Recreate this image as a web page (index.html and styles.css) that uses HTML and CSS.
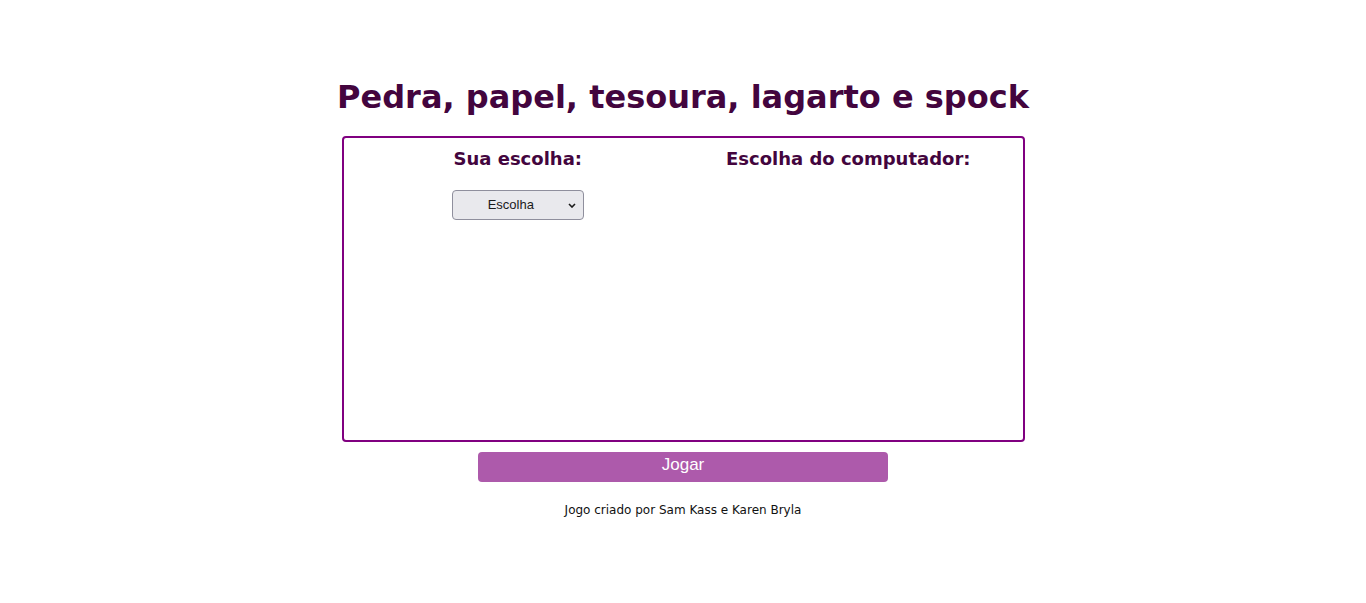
FILE: index.html
```html
<!DOCTYPE html>
<html lang="pt">
<head>
<meta charset="utf-8">
<title>Pedra, papel, tesoura, lagarto e spock</title>
<link rel="stylesheet" href="styles.css">
</head>
<body>
<main class="page">
  <h1 class="title">Pedra, papel, tesoura, lagarto e spock</h1>
  <section class="board">
    <div class="col">
      <h3 class="col-title">Sua escolha:</h3>
      <div class="select-wrap">
        <select class="choice">
          <option>Escolha</option>
          <option>Pedra</option>
          <option>Papel</option>
          <option>Tesoura</option>
          <option>Lagarto</option>
          <option>Spock</option>
        </select>
        <svg class="chev" width="8" height="5" viewBox="0 0 8 5"><path d="M1 1 L4 4 L7 1" fill="none" stroke="#1b1b1b" stroke-width="1.6"/></svg>
      </div>
    </div>
    <div class="col">
      <h3 class="col-title">Escolha do computador:</h3>
    </div>
  </section>
  <button class="play">Jogar</button>
  <p class="credits">Jogo criado por Sam Kass e Karen Bryla</p>
</main>
</body>
</html>
```
FILE: styles.css
```css
html, body {
  margin: 0;
  padding: 0;
  background: #fff;
}
body {
  font-family: "DejaVu Sans", sans-serif;
}
.page {
  display: flex;
  flex-direction: column;
  align-items: center;
  padding-top: 77px;
}
.title {
  margin: 0;
  font-size: 32px;
  font-weight: bold;
  color: #43053e;
  line-height: 40px;
}
.board {
  margin-top: 19px;
  box-sizing: border-box;
  width: 683px;
  height: 306px;
  border: 2px solid #800080;
  border-radius: 4px;
  display: grid;
  grid-template-columns: 1fr 1fr;
  padding: 0 9px;
}
.col {
  display: flex;
  flex-direction: column;
  align-items: center;
}
.col-title {
  margin: 10px 0 0;
  font-size: 18px;
  line-height: 22px;
  font-weight: bold;
  color: #43053e;
}
.select-wrap {
  position: relative;
  margin-top: 20px;
  width: 132px;
  height: 30px;
}
.choice {
  appearance: none;
  -webkit-appearance: none;
  width: 132px;
  height: 30px;
  box-sizing: border-box;
  border: 1px solid #8f8f9d;
  border-radius: 4px;
  background: #e9e9ed;
  font-family: "Liberation Sans", sans-serif;
  font-size: 13px;
  color: #1b1b1b;
  padding: 0 22px 2px 8px;
  text-align: center;
  text-align-last: center;
  margin: 0;
}
.chev {
  position: absolute;
  right: 8px;
  top: 13px;
  pointer-events: none;
}
.play {
  margin-top: 10px;
  width: 410px;
  height: 30px;
  border: none;
  border-radius: 4px;
  background: #ad5aab;
  color: #fff;
  font-family: "Liberation Sans", sans-serif;
  font-size: 17px;
  padding: 0 0 4px;
}
.credits {
  margin: 21px 0 0;
  font-size: 12px;
  color: #111;
}
```
